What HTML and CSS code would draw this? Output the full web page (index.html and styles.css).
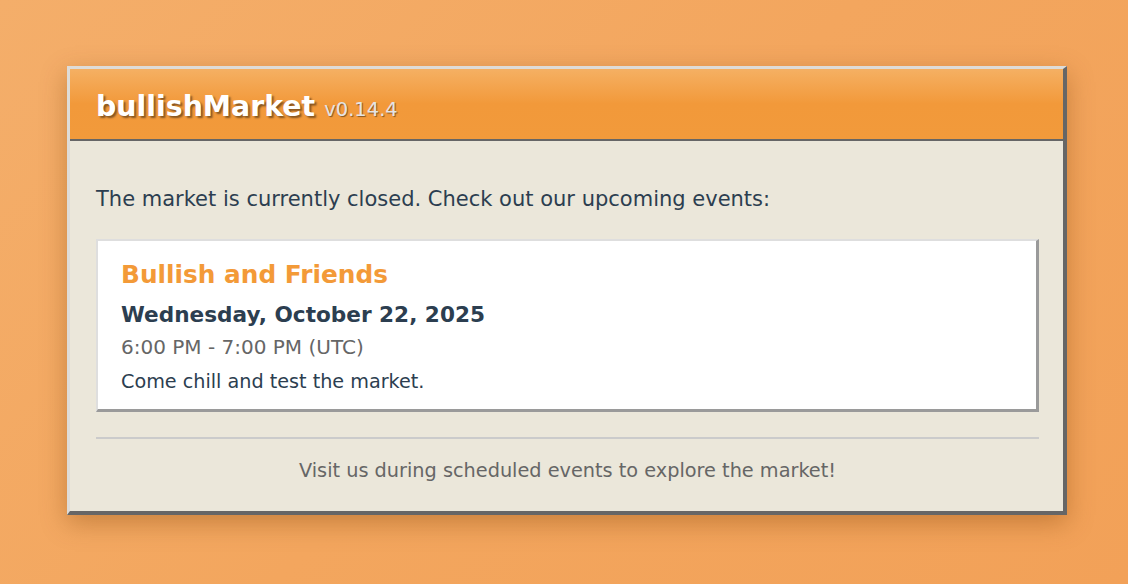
FILE: index.html
```html
<!DOCTYPE html>
<html>
<head>
<meta charset="utf-8">
<link rel="stylesheet" href="styles.css">
</head>
<body>
<div class="page">
  <div class="window">
    <div class="header">
      <span class="brand">bullishMarket</span>
      <span class="version">v0.14.4</span>
    </div>
    <div class="content">
      <p class="intro">The market is currently closed. Check out our upcoming events:</p>
      <div class="event">
        <div class="event-title">Bullish and Friends</div>
        <div class="event-date">Wednesday, October 22, 2025</div>
        <div class="event-time">6:00 PM - 7:00 PM (UTC)</div>
        <div class="event-desc">Come chill and test the market.</div>
      </div>
      <div class="footer">Visit us during scheduled events to explore the market!</div>
    </div>
  </div>
</div>
</body>
</html>
```
FILE: styles.css
```css
html, body {
  margin: 0;
  padding: 0;
  height: 100%;
}
body {
  background: linear-gradient(135deg, #f4ae6a 0%, #f3a65e 50%, #f2a158 100%);
  font-family: "DejaVu Sans", sans-serif;
}
.page {
  height: 584px;
  display: flex;
  align-items: center;
  justify-content: center;
  padding-left: 6px;
  padding-bottom: 4px;
  box-sizing: border-box;
}
.window {
  width: 1000px;
  box-sizing: border-box;
  border-style: solid;
  border-width: 3px 4px 4px 3px;
  border-color: #dedcd8 #666 #666 #dedcd8;
  background: #ebe7da;
  box-shadow: 0 8px 24px rgba(120, 60, 0, 0.35);
}
.header {
  height: 72px;
  box-sizing: border-box;
  border-bottom: 2px solid #666;
  background: linear-gradient(to bottom, #f5b063 0%, #f2993a 50%, #f29a3b 100%);
  display: flex;
  align-items: baseline;
  padding: 21px 26px 0;
}
.brand {
  font-weight: bold;
  font-size: 28.4px;
  line-height: 34px;
  color: #fff;
  text-shadow: 2px 2px 2px rgba(0,0,0,0.45);
}
.version {
  margin-left: 9px;
  font-size: 19.5px;
  color: #e4e4e4;
  text-shadow: 1px 1px 1px rgba(0,0,0,0.45);
}
.content {
  padding: 46px 24px 28px 26px;
}
.intro {
  margin: 0 0 28px;
  font-size: 21px;
  line-height: 24px;
  color: #2c3e50;
}
.event {
  background: #fff;
  border-style: solid;
  border-width: 2px 3px 3px 2px;
  border-color: #dedede #9a9a9a #9a9a9a #dedede;
  padding: 18px 23px 13px;
}
.event-title {
  font-weight: bold;
  font-size: 24.8px;
  color: #f39a38;
  line-height: 32px;
}
.event-date {
  font-weight: bold;
  font-size: 21.6px;
  color: #2c3e50;
  line-height: 30px;
  margin-top: 9px;
}
.event-time {
  font-size: 20px;
  color: #666;
  line-height: 28px;
  margin-top: 3px;
}
.event-desc {
  font-size: 19.2px;
  color: #2c3e50;
  line-height: 28px;
  margin-top: 7px;
}
.footer {
  margin-top: 25px;
  border-top: 2px solid #cbcbcb;
  padding-top: 20px;
  line-height: 24px;
  text-align: center;
  font-size: 19.3px;
  color: #666;
}
```
